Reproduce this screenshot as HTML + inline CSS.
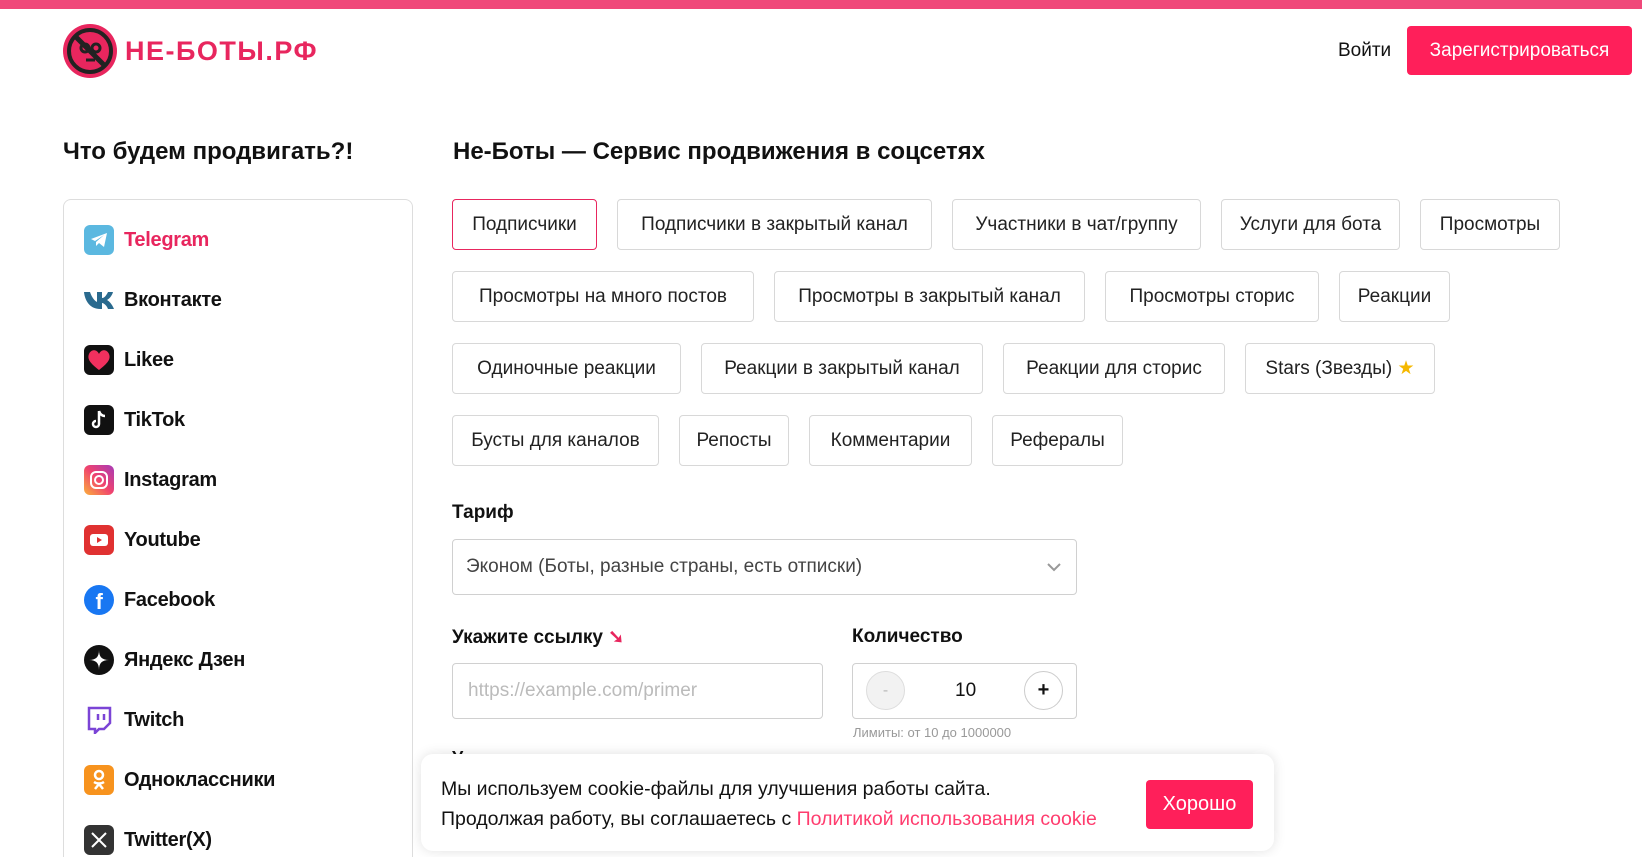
<!DOCTYPE html>
<html><head><meta charset="utf-8"><style>
*{box-sizing:border-box;margin:0;padding:0}
html,body{width:1642px;height:857px;overflow:hidden}
body{background:#fff;font-family:"Liberation Sans",sans-serif;color:#111;position:relative}
.a{position:absolute}
.topbar{left:0;top:0;width:1642px;height:9px;background:#f0487a}
.btn{position:absolute;height:51px;border:1px solid #d8d8d8;border-radius:4px;font-size:19px;line-height:49px;text-align:center;color:#222;white-space:nowrap}
.sel{border-color:#e8265e}
.item{position:absolute;left:84px;height:30px;display:flex;align-items:center;font-size:20px;font-weight:bold;letter-spacing:-0.3px}
.ic{width:30px;height:30px;border-radius:6px;margin-right:10px;flex:none;display:flex;align-items:center;justify-content:center}
.lbl{position:absolute;font-size:19px;font-weight:bold}
.box{position:absolute;border:1px solid #d0d0d0;border-radius:4px}
</style></head><body>
<div class="a topbar"></div>
<svg class="a" style="left:63px;top:24px" width="54" height="54" viewBox="0 0 54 54"><circle cx="27" cy="27" r="27" fill="#e8265e"/><circle cx="27" cy="27" r="21" fill="none" stroke="#222" stroke-width="4"/><circle cx="22" cy="24" r="4" fill="none" stroke="#222" stroke-width="3"/><circle cx="33" cy="24" r="4" fill="none" stroke="#222" stroke-width="3"/><line x1="23" y1="36" x2="32" y2="36" stroke="#222" stroke-width="3"/><line x1="12" y1="12" x2="42" y2="42" stroke="#222" stroke-width="5"/></svg>
<div class="a" style="left:125px;top:36px;font-size:27px;font-weight:bold;color:#e8265e;letter-spacing:1.5px">НЕ-БОТЫ.РФ</div>
<div class="a" style="left:1338px;top:40px;font-size:19px">Войти</div>
<div class="a" style="left:1407px;top:26px;width:225px;height:49px;background:#ff1f5a;border-radius:4px;color:#fff;font-size:19px;line-height:49px;text-align:center">Зарегистрироваться</div>

<div class="a" style="left:63px;top:138px;font-size:24px;font-weight:bold">Что будем продвигать?!</div>
<div class="a" style="left:453px;top:138px;font-size:24px;font-weight:bold">Не-Боты — Сервис продвижения в соцсетях</div>

<div class="a" style="left:63px;top:199px;width:350px;height:658px;border:1px solid #ddd;border-bottom:none;border-radius:8px 8px 0 0"></div>
<div class="item" style="top:225px;color:#e8265e"><div class="ic" style="background:#5bb8e0"><svg width="18" height="16" viewBox="0 0 18 16"><path d="M1 7 17 1 14 15 9 11 6 14 6 10 14 3 5 9Z" fill="#fff"/></svg></div>Telegram</div>
<div class="item" style="top:285px"><div class="ic"><svg width="30" height="18" viewBox="0 0 30 18"><path d="M0 1h6c2 6 5 9 7 10V1h5v6c3 0 5-4 6-6h5c-1 4-4 7-6 8 2 1 5 4 7 9h-6c-1-3-4-6-6-6v6h-2C7 18 1 11 0 1Z" fill="#2a6a8e"/></svg></div>Вконтакте</div>
<div class="item" style="top:345px"><div class="ic" style="background:#111"><svg width="24" height="22" viewBox="0 0 24 22"><path d="M12 21C3 14 0 10 2 5s8-5 10 0c2-5 8-5 10 0s-1 9-10 16Z" fill="#f0305e"/></svg></div>Likee</div>
<div class="item" style="top:405px"><div class="ic" style="background:#111"><svg width="18" height="20" viewBox="0 0 18 20"><path d="M9 1v13a3 3 0 1 1-3-3M9 1c1 3 3 5 6 5" fill="none" stroke="#fff" stroke-width="2.5"/></svg></div>TikTok</div>
<div class="item" style="top:465px"><div class="ic" style="background:linear-gradient(45deg,#fbb03b,#f0436e,#a63ab8)"><svg width="20" height="20" viewBox="0 0 20 20"><rect x="2" y="2" width="16" height="16" rx="5" fill="none" stroke="#fff" stroke-width="2"/><circle cx="10" cy="10" r="4" fill="none" stroke="#fff" stroke-width="2"/></svg></div>Instagram</div>
<div class="item" style="top:525px"><div class="ic" style="background:#e03131"><svg width="20" height="14" viewBox="0 0 20 14"><rect x="1" y="1" width="18" height="12" rx="3" fill="#fff"/><path d="M8 4l5 3-5 3Z" fill="#e03131"/></svg></div>Youtube</div>
<div class="item" style="top:585px"><div class="ic" style="background:#1877f2;border-radius:50%"><span style="color:#fff;font-size:22px;font-weight:bold;margin-top:4px">f</span></div>Facebook</div>
<div class="item" style="top:645px"><div class="ic" style="background:#111;border-radius:50%"><svg width="24" height="24" viewBox="0 0 24 24"><path d="M12 2C12 9 15 12 22 12 15 12 12 15 12 22 12 15 9 12 2 12 9 12 12 9 12 2Z" fill="#fff"/></svg></div>Яндекс Дзен</div>
<div class="item" style="top:705px"><div class="ic"><svg width="26" height="28" viewBox="0 0 26 28"><path d="M3 2h21v15l-6 6h-5l-4 4v-4H3Z" fill="none" stroke="#7b44d6" stroke-width="2.5"/><path d="M12 8v6M18 8v6" stroke="#7b44d6" stroke-width="2.5"/></svg></div>Twitch</div>
<div class="item" style="top:765px"><div class="ic" style="background:#f7931e"><svg width="16" height="22" viewBox="0 0 16 22"><circle cx="8" cy="6" r="4" fill="none" stroke="#fff" stroke-width="2.5"/><path d="M3 13c3 2 7 2 10 0M8 15l-4 5M8 15l4 5" fill="none" stroke="#fff" stroke-width="2.5"/></svg></div>Одноклассники</div>
<div class="item" style="top:825px"><div class="ic" style="background:#333"><svg width="18" height="18" viewBox="0 0 18 18"><path d="M2 2l14 14M16 2 2 16" stroke="#fff" stroke-width="2"/></svg></div>Twitter(X)</div>

<div class="btn sel" style="left:452px;top:199px;width:145px">Подписчики</div>
<div class="btn" style="left:617px;top:199px;width:315px">Подписчики в закрытый канал</div>
<div class="btn" style="left:952px;top:199px;width:249px">Участники в чат/группу</div>
<div class="btn" style="left:1221px;top:199px;width:179px">Услуги для бота</div>
<div class="btn" style="left:1420px;top:199px;width:140px">Просмотры</div>
<div class="btn" style="left:452px;top:271px;width:302px">Просмотры на много постов</div>
<div class="btn" style="left:774px;top:271px;width:311px">Просмотры в закрытый канал</div>
<div class="btn" style="left:1105px;top:271px;width:214px">Просмотры сторис</div>
<div class="btn" style="left:1339px;top:271px;width:111px">Реакции</div>
<div class="btn" style="left:452px;top:343px;width:229px">Одиночные реакции</div>
<div class="btn" style="left:701px;top:343px;width:282px">Реакции в закрытый канал</div>
<div class="btn" style="left:1003px;top:343px;width:222px">Реакции для сторис</div>
<div class="btn" style="left:1245px;top:343px;width:190px">Stars (Звезды) <span style="color:#f5b800">★</span></div>
<div class="btn" style="left:452px;top:415px;width:207px">Бусты для каналов</div>
<div class="btn" style="left:679px;top:415px;width:110px">Репосты</div>
<div class="btn" style="left:809px;top:415px;width:163px">Комментарии</div>
<div class="btn" style="left:992px;top:415px;width:131px">Рефералы</div>

<div class="lbl" style="left:452px;top:502px">Тариф</div>
<div class="box" style="left:452px;top:539px;width:625px;height:56px;font-size:19px;line-height:54px;padding-left:13px;color:#444">Эконом (Боты, разные страны, есть отписки)<svg style="position:absolute;right:14px;top:22px" width="16" height="10" viewBox="0 0 16 10"><path d="M2 2l6 6 6-6" fill="none" stroke="#999" stroke-width="2"/></svg></div>
<div class="lbl" style="left:452px;top:626px">Укажите ссылку <span style="color:#e8265e">➘</span></div>
<div class="box" style="left:452px;top:663px;width:371px;height:56px;font-size:19px;line-height:54px;padding-left:15px;color:#bbb">https://example.com/primer</div>
<div class="lbl" style="left:852px;top:626px">Количество</div>
<div class="box" style="left:852px;top:663px;width:225px;height:56px"></div>
<div class="a" style="left:866px;top:671px;width:39px;height:39px;border-radius:50%;background:#f2f2f2;border:1px solid #ddd;text-align:center;line-height:37px;color:#bbb">-</div>
<div class="a" style="left:955px;top:680px;font-size:19px">10</div>
<div class="a" style="left:1024px;top:671px;width:39px;height:39px;border-radius:50%;border:1px solid #ccc;text-align:center;line-height:37px;font-size:20px;font-weight:bold">+</div>
<div class="a" style="left:853px;top:725px;font-size:13px;color:#999">Лимиты: от 10 до 1000000</div>
<div class="a" style="left:452px;top:748px;font-size:18px;font-weight:bold">У</div>

<div class="a" style="left:421px;top:754px;width:853px;height:97px;background:#fff;border-radius:12px;box-shadow:0 0 12px rgba(0,0,0,.12)"></div>
<div class="a" style="left:441px;top:778px;font-size:19.5px">Мы используем cookie-файлы для улучшения работы сайта.</div>
<div class="a" style="left:441px;top:808px;font-size:19.5px">Продолжая работу, вы соглашаетесь с <span style="color:#ff3c6e">Политикой использования cookie</span></div>
<div class="a" style="left:1146px;top:780px;width:107px;height:49px;background:#ff1f5a;border-radius:4px;color:#fff;font-size:20px;line-height:49px;text-align:center">Хорошо</div>
</body></html>
